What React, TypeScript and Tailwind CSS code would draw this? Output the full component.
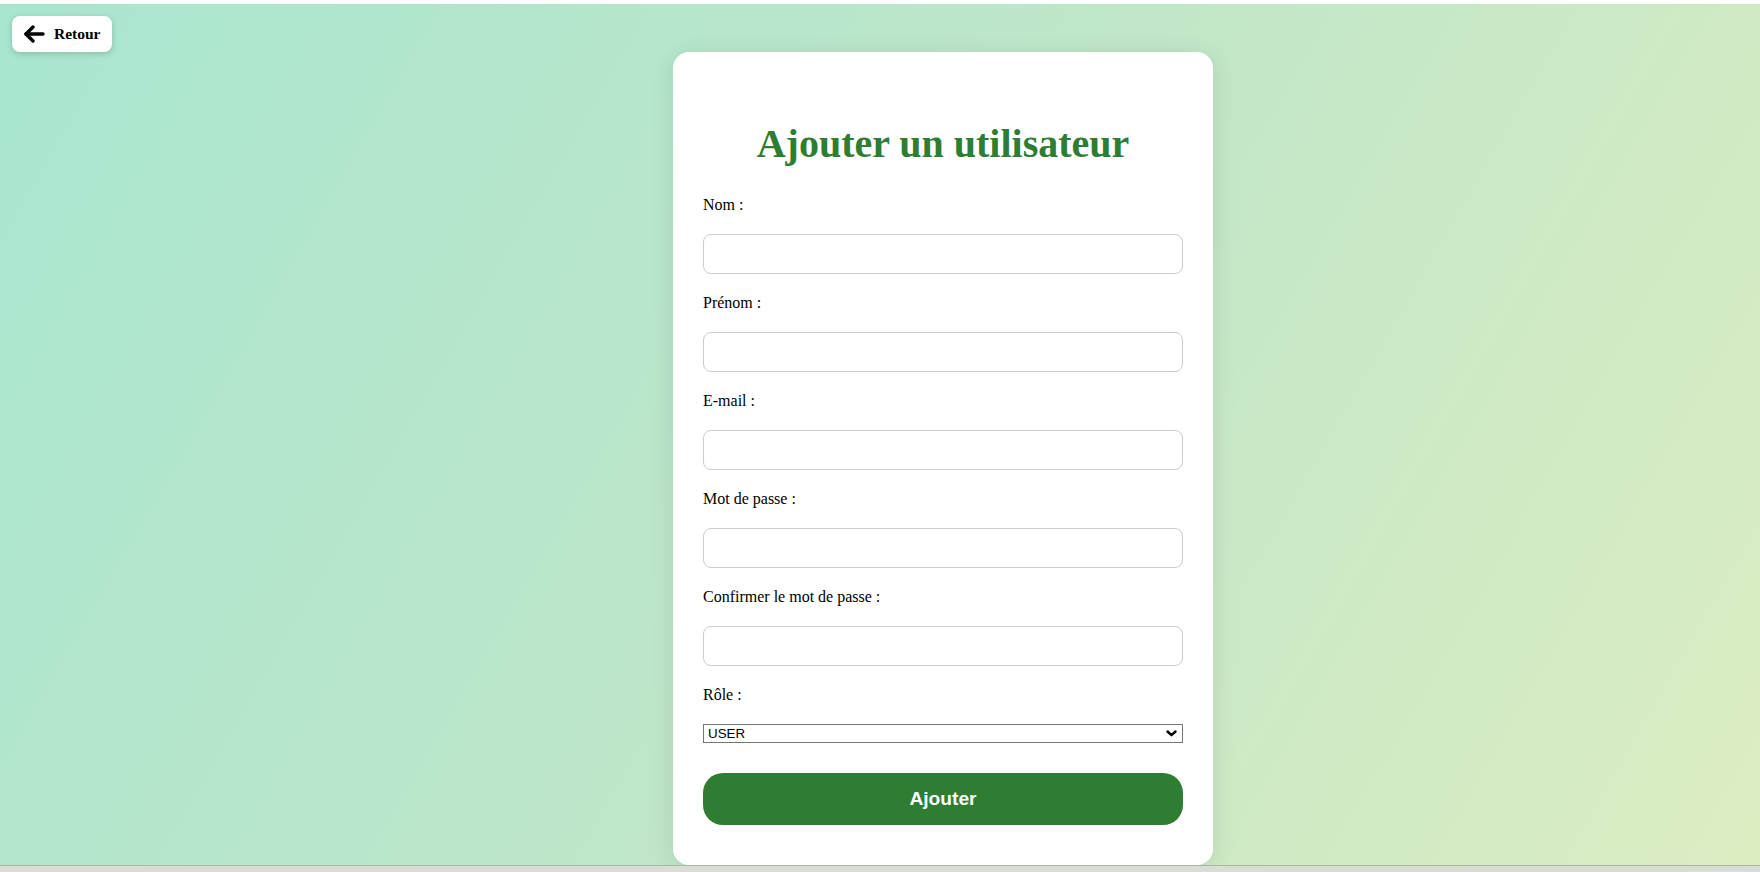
import { useState } from 'react'

const fields = [
  { id: 'nom', label: 'Nom :', type: 'text' },
  { id: 'prenom', label: 'Prénom :', type: 'text' },
  { id: 'email', label: 'E-mail :', type: 'email' },
  { id: 'password', label: 'Mot de passe :', type: 'password' },
  { id: 'confirm', label: 'Confirmer le mot de passe :', type: 'password' },
]

function BackButton() {
  return (
    <button className="absolute left-[12px] top-[12px] flex h-[36px] w-[100px] items-center gap-[9px] rounded-lg bg-white pl-[11px] shadow-[0_2px_6px_rgba(0,0,0,0.18)]">
      <svg width="22" height="18" viewBox="0 0 22 18" fill="none" stroke="black" strokeWidth="3.4" strokeLinecap="round" strokeLinejoin="round">
        <path d="M20 9H3" />
        <path d="M10 2L3 9l7 7" />
      </svg>
      <span className="font-['Liberation_Serif',serif] text-[15.5px] font-bold text-black">Retour</span>
    </button>
  )
}

export default function App() {
  const [role, setRole] = useState('USER')

  return (
    <div className="flex h-[872px] flex-col overflow-hidden bg-white font-['Liberation_Serif',serif]">
      <div className="h-[4px] bg-white" />
      <main className="relative h-[861px] overflow-hidden bg-[linear-gradient(120deg,#a8e6cf_0%,#bfe6c9_50%,#dcedc1_100%)]">
        <BackButton />

        <div className="mt-[48px] ml-[673px] flex h-[813px] w-[540px] flex-col rounded-2xl bg-white px-[30px] pt-[70px] pb-[40px] shadow-[0_4px_24px_rgba(0,0,0,0.1)]">
          <h1 className="h-[44px] text-center text-[40px] leading-[44px] font-bold text-[#2e7d32]">
            Ajouter un utilisateur
          </h1>

          <form className="mt-[30px] flex flex-col" onSubmit={(e) => e.preventDefault()}>
            {fields.map((f) => (
              <div key={f.id} className="flex flex-col">
                <label htmlFor={f.id} className="h-[18px] text-[16px] leading-[18px] text-black">
                  {f.label}
                </label>
                <input
                  id={f.id}
                  type={f.type}
                  className="mt-[20px] mb-[20px] h-[40px] w-full rounded-lg border border-[#cccccc] bg-white px-[10px] text-[16px] outline-none"
                />
              </div>
            ))}

            <label htmlFor="role" className="h-[18px] text-[16px] leading-[18px] text-black">
              Rôle :
            </label>
            <div className="relative mt-[20px] h-[19px]">
              <select
                id="role"
                value={role}
                onChange={(e) => setRole(e.target.value)}
                className="block h-[19px] w-full appearance-none border border-[#767676] bg-white py-0 pl-[4px] font-['Liberation_Sans',Arial,sans-serif] text-[13.33px] leading-[17px] text-black"
              >
                <option value="USER">USER</option>
                <option value="ADMIN">ADMIN</option>
              </select>
              <svg
                className="pointer-events-none absolute top-[6px] right-[6px]"
                width="11"
                height="7"
                viewBox="0 0 11 7"
                fill="none"
                stroke="black"
                strokeWidth="2.4"
                strokeLinecap="round"
                strokeLinejoin="round"
              >
                <path d="M1.5 1.5L5.5 5.2l4-3.7" />
              </svg>
            </div>

            <button
              type="submit"
              className="mt-[30px] h-[52px] w-full rounded-[20px] bg-[#2e7d32] font-['Liberation_Sans',Arial,sans-serif] text-[19.2px] font-bold text-white"
            >
              Ajouter
            </button>
          </form>
        </div>
      </main>
      <div className="h-[7px] border-t border-[#a9b8a3] bg-[#dadcd6]" />
    </div>
  )
}
